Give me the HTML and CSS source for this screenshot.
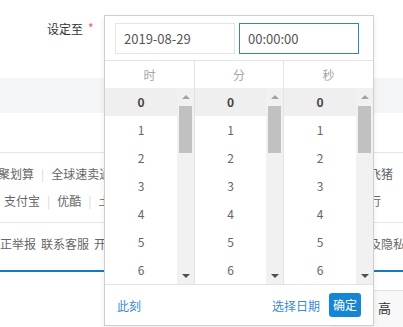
FILE: index.html
```html
<!DOCTYPE html>
<html lang="zh-CN">
<head>
<meta charset="utf-8">
<title>设定至</title>
<link rel="stylesheet" href="styles.css">
</head>
<body>
<div class="page">
  <div class="form-row">
    <span class="label">设定至</span><span class="req">*</span>
  </div>
  <div class="band"></div>
  <div class="gap"></div>
  <div class="links">
    <div class="lrow">
      <div class="left shift-a">聚划算<i class="sep">|</i>全球速卖通</div>
      <div class="right">飞猪</div>
    </div>
    <div class="lrow">
      <div class="left shift-b">支付宝<i class="sep">|</i>优酷<i class="sep">|</i>土豆</div>
      <div class="right">行</div>
    </div>
  </div>
  <div class="links2">
    <div class="lrow">
      <div class="left shift-c">廉正举报<span class="sp">联系客服</span><span class="sp">开放</span></div>
      <div class="right">及隐私</div>
    </div>
  </div>
  <div class="blue"></div>
  <div class="table-head"><span>高</span></div>
</div>

<div class="picker">
  <div class="inputs">
    <div class="inp">2019-08-29</div>
    <div class="inp active">00:00:00</div>
  </div>
  <div class="cols">
    <div class="col">
      <div class="col-head">时</div>
      <div class="col-body">
        <ul class="list">
          <li class="sel">0</li><li>1</li><li>2</li><li>3</li><li>4</li><li>5</li><li>6</li>
        </ul>
        <div class="sb"><div class="sb-btn"><span class="up"></span></div><div class="thumb"></div><div class="sb-fill"></div><div class="sb-btn"><span class="down"></span></div></div>
      </div>
    </div>
    <div class="col">
      <div class="col-head">分</div>
      <div class="col-body">
        <ul class="list">
          <li class="sel">0</li><li>1</li><li>2</li><li>3</li><li>4</li><li>5</li><li>6</li>
        </ul>
        <div class="sb"><div class="sb-btn"><span class="up"></span></div><div class="thumb"></div><div class="sb-fill"></div><div class="sb-btn"><span class="down"></span></div></div>
      </div>
    </div>
    <div class="col">
      <div class="col-head">秒</div>
      <div class="col-body">
        <ul class="list">
          <li class="sel">0</li><li>1</li><li>2</li><li>3</li><li>4</li><li>5</li><li>6</li>
        </ul>
        <div class="sb"><div class="sb-btn"><span class="up"></span></div><div class="thumb"></div><div class="sb-fill"></div><div class="sb-btn"><span class="down"></span></div></div>
      </div>
    </div>
  </div>
  <div class="foot">
    <a class="link">此刻</a>
    <a class="link push">选择日期</a>
    <span class="btn">确定</span>
  </div>
</div>
</body>
</html>
```

FILE: styles.css
```css
* { box-sizing: border-box; }
html, body {
  margin: 0;
  padding: 0;
  background: #fff;
  overflow: hidden;
}
body {
  width: 403px;
  height: 327px;
  position: relative;
  font-family: "Noto Sans CJK SC", "Noto Sans", sans-serif;
  font-size: 12px;
  color: #666;
}
.page { width: 403px; }

.form-row {
  height: 78px;
  display: flex;
  align-items: flex-start;
  padding: 20px 0 0 47px;
}
.label { color: #333; font-size: 12px; line-height: 18px; }
.req { color: #f0566a; font-size: 12px; line-height: 12px; margin-left: 5px; margin-top: 2px; }

.band { height: 35px; background: #f4f5f7; }
.gap { height: 40px; border-bottom: 1px solid #e6e6e6; }

.links {
  padding: 7px 0 8px;
  border-bottom: 1px solid #e6e6e6;
}
.links2 { padding: 7px 0 0; }
.lrow {
  display: grid;
  grid-template-columns: 108px 261px 1fr;
  height: 27px;
  line-height: 27px;
  white-space: nowrap;
  overflow: hidden;
}
.left { overflow: hidden; grid-column: 1; }
.right { grid-column: 3; white-space: nowrap; }
.shift-a { padding-left: 0; text-indent: -2px; }
.shift-b { padding-left: 4px; }
.shift-c { text-indent: -12px; }
.sep { font-style: normal; color: #d6d6d6; padding: 0 7px; }
.sp { margin-left: 5px; }

.blue { height: 2px; background: #1779c2; margin-top: 13px; }
.table-head {
  margin: 18px 0 0 330px;
  height: 37px;
  border-top: 1px solid #e3e3e3;
  background: #f8f8f8;
  padding-left: 48px;
  line-height: 34px;
  color: #333;
  font-size: 13px;
}

/* picker popup */
.picker {
  position: absolute;
  left: 104px;
  top: 15px;
  width: 270px;
  height: 311px;
  background: #fff;
  border: 1px solid #cfcfcf;
  box-shadow: 0 2px 6px rgba(0,0,0,0.08);
  display: flex;
  flex-direction: column;
}
.inputs {
  height: 45px;
  padding: 7px 0 0 10px;
  display: flex;
  gap: 4px;
  border-bottom: 1px solid #e3e3e3;
}
.inp {
  width: 120px;
  height: 31px;
  border: 1px solid #e4e4e4;
  padding-left: 8px;
  line-height: 29px;
  font-size: 13px;
  color: #555;
}
.inp.active { border-color: #3484c4; }

.cols {
  display: grid;
  grid-template-columns: 90px 89px 89px;
  border-bottom: 1px solid #e3e3e3;
}
.col { border-right: 1px solid #e3e3e3; display: flex; flex-direction: column; }
.col:last-child { border-right: none; }
.col-head {
  height: 27px;
  line-height: 28px;
  text-align: center;
  color: #a6a6a6;
  font-size: 12px;
}
.col-body { display: flex; height: 196px; }
.list {
  list-style: none;
  margin: 0;
  padding: 0;
  flex: 1;
}
.list li {
  height: 28px;
  line-height: 28px;
  text-align: center;
  color: #666;
  font-size: 12px;
}
.list li.sel { background: #efefef; font-weight: bold; color: #444; }

.sb {
  width: 17px;
  background: #f1f1f1;
  display: flex;
  flex-direction: column;
}
.sb-btn {
  height: 17px;
  display: flex;
  align-items: center;
  justify-content: center;
}
.up {
  width: 0; height: 0;
  border-left: 4px solid transparent;
  border-right: 4px solid transparent;
  border-bottom: 4px solid #a3a3a3;
}
.down {
  width: 0; height: 0;
  border-left: 4px solid transparent;
  border-right: 4px solid transparent;
  border-top: 4px solid #505050;
}
.thumb { height: 47px; margin: 1px 2px 0; background: #c1c1c1; }
.sb-fill { flex: 1; }

.foot {
  flex: 1;
  display: flex;
  align-items: center;
  padding: 0 12px 0 12px;
}
.link { color: #3a8bd0; font-size: 12px; cursor: pointer; }
.push { margin-left: auto; margin-right: 9px; }
.btn {
  background: #1686d4;
  color: #fff;
  border-radius: 3px;
  height: 24px;
  line-height: 24px;
  padding: 0 4px;
  font-size: 12px;
}
```
